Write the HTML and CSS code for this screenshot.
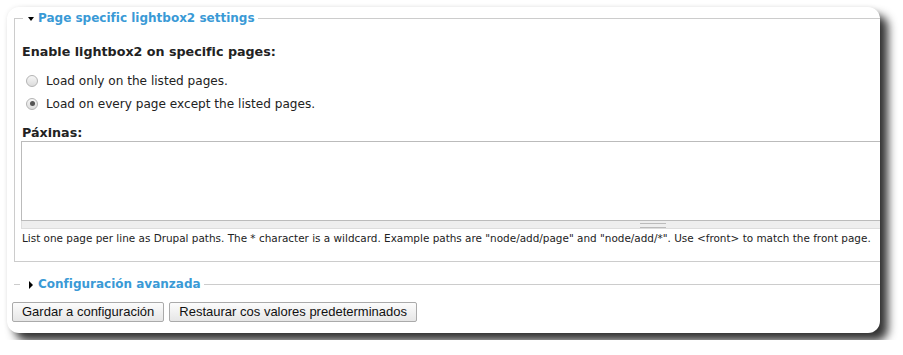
FILE: index.html
```html
<!DOCTYPE html>
<html lang="gl">
<head>
    <meta charset="UTF-8">
    <title>Lightbox2 - configuración</title>
    <link rel="stylesheet" href="styles.css">
</head>
<body>
    <div class="shot">
        <form class="card">
            <fieldset class="box">
                <legend><span class="arrow down"></span>Page specific lightbox2 settings</legend>
                <div class="field-title">Enable lightbox2 on specific pages:</div>
                <label class="radio"><input type="radio" name="vis"> Load only on the listed pages.</label>
                <label class="radio"><input type="radio" name="vis" checked> Load on every page except the listed pages.</label>
                <div class="field-title pages">Páxinas:</div>
                <textarea class="pages-text"></textarea>
                <div class="grippie"></div>
                <div class="desc">List one page per line as Drupal paths. The * character is a wildcard. Example paths are "node/add/page" and "node/add/*". Use &lt;front&gt; to match the front page.</div>
            </fieldset>
            <fieldset class="box collapsed">
                <legend><span class="arrow right"></span>Configuración avanzada</legend>
            </fieldset>
            <div class="actions">
                <button type="button">Gardar a configuración</button>
                <button type="button">Restaurar cos valores predeterminados</button>
            </div>
        </form>
    </div>
</body>
</html>
```

FILE: styles.css
```css
body {
    margin: 0;
    background: white;
    font-family: "DejaVu Sans", Verdana, sans-serif;
    color: #222;
}
.shot {
    padding: 7px;
}
.card {
    width: 873px;
    height: 326px;
    box-sizing: border-box;
    background: white;
    border-radius: 12px;
    overflow: hidden;
    padding: 0 0 0 5px;
    margin: 0;
    box-shadow: 8px 8px 10px rgba(0, 0, 0, 0.8), 0 0 5px rgba(0, 0, 0, 0.08);
}
.box {
    width: 900px;
    margin: 4px 0 0 2px;
    padding: 0 0 17px 7px;
    border: 1px solid #ccc;
    border-right: none;
}
.box legend {
    color: #3a9ad6;
    font-weight: bold;
    font-size: 12px;
    padding: 0 3px 0 5px;
    margin-left: 1px;
}
.arrow {
    display: inline-block;
    width: 0;
    height: 0;
    margin-right: 4px;
    vertical-align: middle;
}
.arrow.down {
    border-left: 3px solid transparent;
    border-right: 3px solid transparent;
    border-top: 4px solid #000;
}
.arrow.right {
    border-top: 4px solid transparent;
    border-bottom: 4px solid transparent;
    border-left: 4px solid #000;
    margin-right: 5px;
}
.field-title {
    font-weight: bold;
    font-size: 12.7px;
    margin: 19px 0 10px;
}
.radio {
    display: flex;
    align-items: center;
    font-size: 12.1px;
    height: 23px;
}
.radio input {
    appearance: none;
    width: 12px;
    height: 12px;
    margin: 0 8px 0 4px;
    border: 1px solid #b4b4b4;
    border-radius: 50%;
    background: linear-gradient(#f6f6f6, #dcdcdc);
    box-sizing: border-box;
    display: flex;
    align-items: center;
    justify-content: center;
}
.radio input:checked::after {
    content: "";
    width: 5px;
    height: 5px;
    border-radius: 50%;
    background: #555;
}
.field-title.pages {
    margin: 10px 0 1px;
}
.pages-text {
    display: block;
    width: 870px;
    height: 80px;
    box-sizing: border-box;
    border: 1px solid #bbb;
    margin: 0 0 0 -1px;
    resize: none;
}
.grippie {
    width: 870px;
    height: 8px;
    margin-left: -1px;
    background: #eee;
    border: 1px solid #ddd;
    border-top: none;
    box-sizing: border-box;
    position: relative;
}
.grippie::after {
    content: "";
    position: absolute;
    left: 618px;
    top: 2px;
    width: 26px;
    height: 3px;
    border-top: 1px solid #bbb;
    border-bottom: 1px solid #bbb;
}
.desc {
    font-size: 10.45px;
    margin-top: 3px;
}
.box.collapsed {
    border-left: none;
    border-bottom: none;
    margin-top: 15px;
    padding: 0;
}
.box.collapsed legend {
    margin-left: 6px;
    padding-left: 9px;
}
.actions {
    margin-top: 10px;
}
.actions button {
    font-family: "Liberation Sans", Arial, sans-serif;
    font-size: 13px;
    color: #111;
    height: 20px;
    padding: 0 9px;
    margin-right: 0;
    border: 1px solid #aaa;
    border-radius: 2px;
    background: linear-gradient(#fcfcfc, #e6e6e6);
}
```
